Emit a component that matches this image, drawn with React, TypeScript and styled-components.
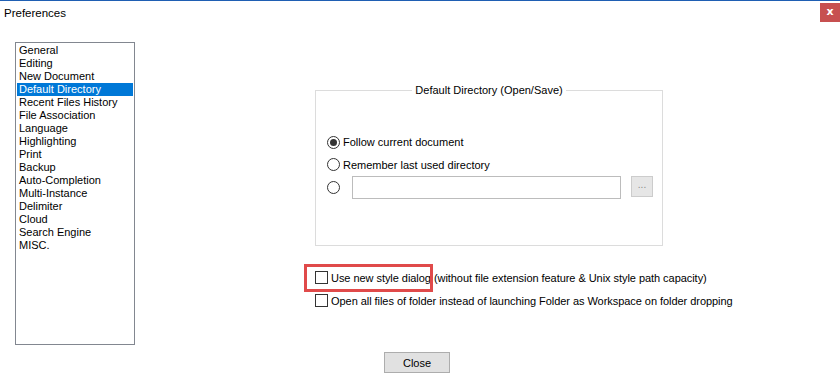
import styled, { createGlobalStyle } from "styled-components";

const GlobalStyle = createGlobalStyle`
  html, body {
    margin: 0;
    padding: 0;
    background: #ffffff;
  }
  body {
    font-family: "Liberation Sans", Arial, sans-serif;
    font-size: 11px;
    color: #000000;
  }
`;

const pages = [
  "General",
  "Editing",
  "New Document",
  "Default Directory",
  "Recent Files History",
  "File Association",
  "Language",
  "Highlighting",
  "Print",
  "Backup",
  "Auto-Completion",
  "Multi-Instance",
  "Delimiter",
  "Cloud",
  "Search Engine",
  "MISC.",
];

const Window = styled.div`
  width: 840px;
  height: 384px;
  box-sizing: border-box;
  border-top: 1px solid #1f5fb3;
  display: flex;
  flex-direction: column;
  overflow: hidden;
  background: #ffffff;
`;

const TitleBar = styled.div`
  height: 25px;
  display: flex;
  align-items: flex-start;
  justify-content: space-between;
`;

const Title = styled.div`
  font-size: 11.5px;
  line-height: 14px;
  padding: 5px 0 0 4px;
`;

const CloseX = styled.div`
  width: 20px;
  height: 19px;
  margin-top: 2px;
  background: #c75050;
  color: #ffffff;
  font-family: "DejaVu Sans", sans-serif;
  font-weight: bold;
  font-size: 11px;
  line-height: 18px;
  text-align: center;
`;

const Body = styled.div`
  display: flex;
  height: 326px;
`;

const PageList = styled.ul`
  list-style: none;
  margin: 16px 0 0 15px;
  padding: 1px;
  width: 116px;
  height: 299px;
  border: 1px solid #828790;
  box-sizing: content-box;
`;

const PageItem = styled.li<{ $active?: boolean }>`
  height: 13px;
  line-height: 13px;
  padding-left: 2px;
  white-space: nowrap;
  background: ${(p) => (p.$active ? "#0078d7" : "transparent")};
  color: ${(p) => (p.$active ? "#ffffff" : "#000000")};
`;

const Main = styled.div`
  padding-left: 180px;
  display: flex;
  flex-direction: column;
`;

const Group = styled.fieldset`
  margin: 58px 0 0 0;
  padding: 0;
  width: 346px;
  height: 160px;
  box-sizing: content-box;
  border: 1px solid #dcdcdc;
  min-width: 0;
`;

const Legend = styled.legend`
  margin: 0 auto;
  padding: 0 3px;
  line-height: 13px;
`;

const RadioList = styled.div`
  margin-top: 34px;
  padding-left: 11px;
  display: flex;
  flex-direction: column;
`;

const RadioRow = styled.label<{ $height: number }>`
  display: flex;
  align-items: center;
  height: ${(p) => p.$height}px;
  gap: 3px;
  white-space: nowrap;
`;

const RadioDot = styled.span<{ $checked?: boolean }>`
  width: 11px;
  height: 11px;
  border: 1px solid #333333;
  border-radius: 50%;
  background: #ffffff;
  position: relative;
  flex: none;
  &::after {
    content: "";
    display: ${(p) => (p.$checked ? "block" : "none")};
    position: absolute;
    left: 2px;
    top: 2px;
    width: 7px;
    height: 7px;
    border-radius: 50%;
    background: #333333;
  }
`;

const PathInput = styled.div`
  width: 267px;
  height: 21px;
  border: 1px solid #bcbcbc;
  margin-left: 9px;
  flex: none;
`;

const BrowseButton = styled.div`
  width: 20px;
  height: 19px;
  border: 1px solid #cccccc;
  background: #e6e6e6;
  color: #8c8c8c;
  margin-left: 7px;
  margin-top: -2px;
  text-align: center;
  line-height: 15px;
  font-size: 10px;
  flex: none;
`;

const Options = styled.div`
  margin-top: 20px;
  display: flex;
  flex-direction: column;
`;

const CheckRow = styled.label`
  position: relative;
  display: flex;
  align-items: center;
  height: 23px;
  gap: 3px;
  white-space: nowrap;
  letter-spacing: -0.05px;
`;

const CheckBox = styled.span`
  width: 11px;
  height: 11px;
  border: 1px solid #333333;
  background: #ffffff;
  flex: none;
`;

const Highlight = styled.span`
  position: absolute;
  left: -11px;
  top: -2px;
  width: 123px;
  height: 22px;
  border: 3px solid #e04a4a;
  pointer-events: none;
`;

const Footer = styled.div`
  display: flex;
  justify-content: center;
  padding-right: 6px;
`;

const Button = styled.button`
  width: 66px;
  height: 21px;
  border: 1px solid #adadad;
  background: #e1e1e1;
  font-family: "Liberation Sans", Arial, sans-serif;
  font-size: 11px;
  color: #000000;
  padding: 0;
`;

export default function App() {
  return (
    <>
      <GlobalStyle />
      <Window>
        <TitleBar>
          <Title>Preferences</Title>
          <CloseX>x</CloseX>
        </TitleBar>
        <Body>
          <PageList>
            {pages.map((p) => (
              <PageItem key={p} $active={p === "Default Directory"}>
                {p}
              </PageItem>
            ))}
          </PageList>
          <Main>
            <Group>
              <Legend>Default Directory (Open/Save)</Legend>
              <RadioList>
                <RadioRow $height={22}>
                  <RadioDot $checked />
                  Follow current document
                </RadioRow>
                <RadioRow $height={23}>
                  <RadioDot />
                  Remember last used directory
                </RadioRow>
                <RadioRow $height={22}>
                  <RadioDot />
                  <PathInput />
                  <BrowseButton>...</BrowseButton>
                </RadioRow>
              </RadioList>
            </Group>
            <Options>
              <CheckRow>
                <Highlight />
                <CheckBox />
                Use new style dialog (without file extension feature &amp; Unix style path capacity)
              </CheckRow>
              <CheckRow>
                <CheckBox />
                Open all files of folder instead of launching Folder as Workspace on folder dropping
              </CheckRow>
            </Options>
          </Main>
        </Body>
        <Footer>
          <Button>Close</Button>
        </Footer>
      </Window>
    </>
  );
}
